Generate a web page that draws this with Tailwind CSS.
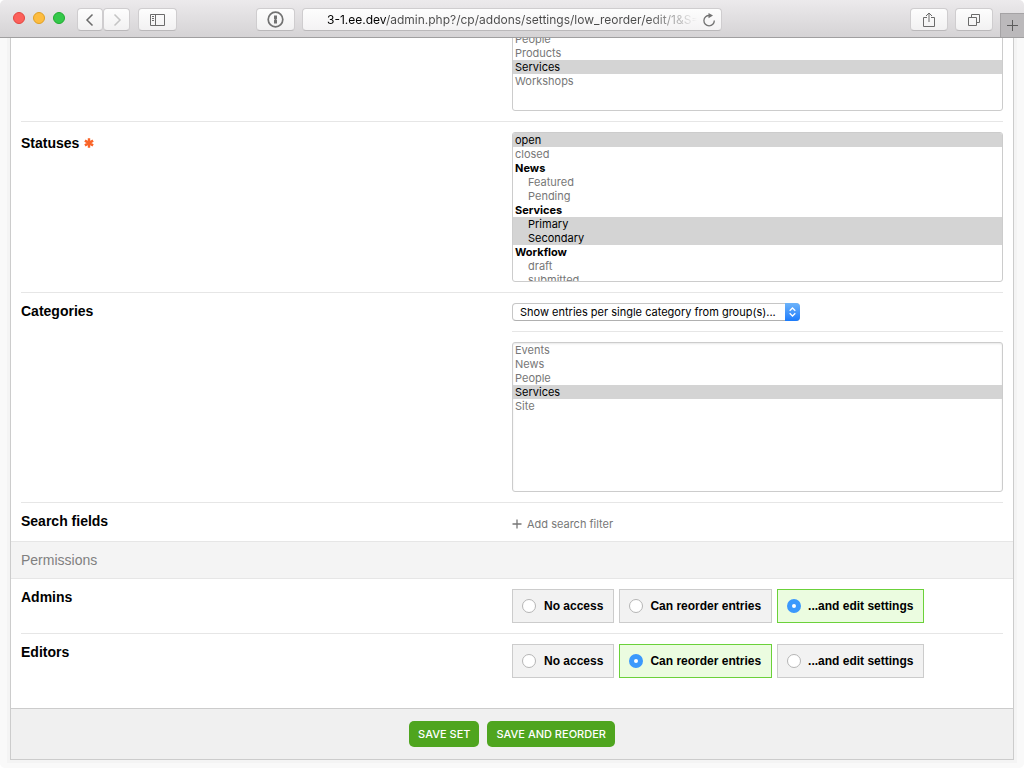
<!DOCTYPE html>
<html lang="en">
<head>
  <meta charset="UTF-8" />
  <meta name="viewport" content="width=device-width, initial-scale=1.0"/>
  <title>Low Reorder</title>
  <script src="https://cdn.jsdelivr.net/npm/@tailwindcss/browser@4"></script>
</head>
<body class="bg-white font-['Inter','Liberation_Sans',sans-serif] text-[11px] text-black">
  <div class="flex h-screen flex-col overflow-hidden rounded-[5px] bg-[#f9f9f9]">

    <!-- Browser toolbar -->
    <header class="z-10 grid h-[38px] shrink-0 grid-cols-[1fr_420px_1fr] border-b border-[#a09fa0] bg-linear-to-b from-[#eceaec] to-[#d5d3d5] pt-2 text-[#6b6b6b]">
      <div class="flex h-[23px] items-center pl-[13px] pr-[7px]">
        <div class="mr-3 flex gap-2 pb-[3px]">
          <span class="size-3 rounded-full border border-[#e2463f] bg-[#fc605b]"></span>
          <span class="size-3 rounded-full border border-[#dfa023] bg-[#fdbc40]"></span>
          <span class="size-3 rounded-full border border-[#1fab2f] bg-[#34c84a]"></span>
        </div>
        <div class="mr-2 flex">
          <button aria-label="Back" class="flex h-[23px] w-[26px] items-center justify-center rounded-[4px] border border-[#cfcdcf] border-b-[#bab8ba] bg-linear-to-b from-[#fdfdfd] to-[#f2f1f2]">
            <svg class="h-[14px] w-[10px]" viewBox="0 0 10 14" fill="none" stroke="#6b6b6b" stroke-width="1.5"><path d="M7.5 1.5 2 7l5.500 5.500"/></svg>
          </button>
          <button aria-label="Forward" class="flex h-[23px] w-[27px] items-center justify-center rounded-[4px] border border-[#cfcdcf] border-b-[#bab8ba] bg-linear-to-b from-[#fdfdfd] to-[#f2f1f2]">
            <svg class="h-[14px] w-[10px]" viewBox="0 0 10 14" fill="none" stroke="#c4c4c4" stroke-width="1.5"><path d="M2.500 1.500 8 7l-5.500 5.500"/></svg>
          </button>
        </div>
        <button aria-label="Sidebar" class="flex h-[23px] w-[39px] items-center justify-center rounded-[4px] border border-[#cfcdcf] border-b-[#bab8ba] bg-linear-to-b from-[#fdfdfd] to-[#f2f1f2]">
          <svg class="h-3 w-[15px]" viewBox="0 0 15 12" fill="none" stroke="#6b6b6b"><path d="M.5.5h14v11H.5zM5.500.5v11M2 2.500h2M2 4.500h2M2 6.500h2"/></svg>
        </button>
        <button aria-label="1Password" class="ml-auto flex h-[23px] w-[39px] items-center justify-center rounded-[4px] border border-[#cfcdcf] border-b-[#bab8ba] bg-linear-to-b from-[#fdfdfd] to-[#f2f1f2]">
          <svg class="size-[17px]" viewBox="0 0 17 17"><circle cx="8.500" cy="8.500" r="7.300" fill="none" stroke="#727272" stroke-width="1.700"/><path fill="#727272" d="M7 4.500h3v3.300l-.7.700.7.700v3.300H7V9.200l.7-.7-.7-.7z"/></svg>
        </button>
      </div>

      <div class="flex h-[23px] items-center rounded-[4px] border border-[#cfcdcf] border-b-[#bab8ba] bg-linear-to-b from-[#fdfdfd] to-[#f4f3f4] pl-6 pr-[5px]">
        <input aria-label="Address" type="text" value="3-1.ee.dev/admin.php?/cp/addons/settings/low_reorder/edit/1&amp;S=0" class="h-full min-w-0 flex-1 bg-[linear-gradient(90deg,#000_59px,#4a4a4a_59px,#4a4a4a_320px,transparent_370px)] bg-clip-text text-xs text-transparent outline-none"/>
        <button aria-label="Reload" class="shrink-0">
          <svg class="size-[14px]" viewBox="0 0 14 14"><path d="M7.500 2.500A5.200 5.200 0 1 0 12.300 7.500" fill="none" stroke="#727272" stroke-width="1.300"/><path fill="#727272" d="M6.500 0l4.500 2.600-4.500 2.600z"/></svg>
        </button>
      </div>

      <div class="flex justify-end gap-[7px]">
        <button aria-label="Share" class="flex h-[23px] w-[38px] items-center justify-center rounded-[4px] border border-[#cfcdcf] border-b-[#bab8ba] bg-linear-to-b from-[#fdfdfd] to-[#f2f1f2]">
          <svg class="h-4 w-3" viewBox="0 0 12 16" fill="none" stroke="#6b6b6b"><path d="M4 5.500H.5v9h11v-9H8M6 10V1M3 4l3-3 3 3"/></svg>
        </button>
        <button aria-label="Show tabs" class="flex h-[23px] w-[38px] items-center justify-center rounded-[4px] border border-[#cfcdcf] border-b-[#bab8ba] bg-linear-to-b from-[#fdfdfd] to-[#f2f1f2]">
          <svg class="size-3" viewBox="0 0 12 12" fill="none" stroke="#6b6b6b"><path d="M.5 3.500h8v8h-8zM3.500 3V.5h8v8H9"/></svg>
        </button>
        <button aria-label="New tab" class="mt-[5px] flex w-6 items-center justify-center border-l border-t border-[#a5a3a5] bg-[#bbb9bb]">
          <svg class="size-[11px]" viewBox="0 0 11 11" stroke="#5c5c5c"><path d="M5.500 0v11M0 5.500h11"/></svg>
        </button>
      </div>
    </header>

    <!-- Page, scrolled down to its end -->
    <main class="flex min-h-0 flex-1 flex-col justify-end px-[10px] pb-2">
      <form class="shrink-0 border border-[#ccc] bg-white ring-[3px] ring-[#f4f4f4]">
        <div class="px-[10px]">
          <div class="flex border-b border-[#e6e6e6] py-[10px]">
            <div class="w-1/2"></div>
            <select multiple aria-label="Channels" class="h-20 w-1/2 overflow-hidden rounded-[3px] border border-[#ccc] bg-white text-[#777] [scrollbar-width:none]">
              <option class="h-[14px] min-h-0 px-[2px] py-0 leading-[14px]">People</option>
              <option class="h-[14px] min-h-0 px-[2px] py-0 leading-[14px]">Products</option>
              <option selected class="h-[14px] min-h-0 bg-[#d4d4d4] px-[2px] py-0 leading-[14px] text-black">Services</option>
              <option class="h-[14px] min-h-0 px-[2px] py-0 leading-[14px]">Workshops</option>
            </select>
          </div>

          <div class="flex border-b border-[#e6e6e6] py-[10px]">
            <label for="statuses" class="flex w-1/2 items-center gap-[5px] self-start font-['Liberation_Sans',sans-serif] text-sm leading-[22px] font-bold">
              Statuses
              <svg class="size-[10px]" viewBox="0 0 10 10" stroke="#fa6428" stroke-width="2.400"><path d="M5 .3v9.400M.9 2.600l8.200 4.800M.9 7.400l8.200-4.800"/></svg>
            </label>
            <select id="statuses" multiple class="h-[150px] w-1/2 overflow-hidden rounded-[3px] border border-[#ccc] bg-white text-[#777] [scrollbar-width:none]">
              <option selected class="h-[14px] min-h-0 bg-[#d4d4d4] px-[2px] py-0 leading-[14px] text-black">open</option>
              <option class="h-[14px] min-h-0 px-[2px] py-0 leading-[14px]">closed</option>
              <optgroup label="News" class="p-0 text-black">
                <option class="-mt-px h-[14px] min-h-0 py-0 pl-[15px] font-normal leading-[14px] text-[#777]">Featured</option>
                <option class="h-[14px] min-h-0 py-0 pl-[15px] font-normal leading-[14px] text-[#777]">Pending</option>
              </optgroup>
              <optgroup label="Services" class="p-0 text-black">
                <option selected class="-mt-px h-[14px] min-h-0 bg-[#d4d4d4] py-0 pl-[15px] font-normal leading-[14px] text-black">Primary</option>
                <option selected class="h-[14px] min-h-0 bg-[#d4d4d4] py-0 pl-[15px] font-normal leading-[14px] text-black">Secondary</option>
              </optgroup>
              <optgroup label="Workflow" class="p-0 text-black">
                <option class="-mt-px h-[14px] min-h-0 py-0 pl-[15px] font-normal leading-[14px] text-[#777]">draft</option>
                <option class="h-[14px] min-h-0 py-0 pl-[15px] font-normal leading-[14px] text-[#777]">submitted</option>
              </optgroup>
            </select>
          </div>

          <div class="flex border-b border-[#e6e6e6] py-[10px]">
            <label for="categoryMode" class="w-1/2 self-start font-['Liberation_Sans',sans-serif] text-sm leading-4 font-bold">Categories</label>
            <div class="w-1/2">
              <div class="border-b border-[#e6e6e6] pb-[10px]">
                <div class="relative w-72">
                  <select id="categoryMode" class="block h-[18px] w-full appearance-none rounded-[4px] border border-[#c6c6c6] border-b-[#b0b0b0] bg-white pl-[7px] pr-4 leading-4">
                    <option>Show entries per single category from group(s)...</option>
                  </select>
                  <span class="pointer-events-none absolute inset-y-0 right-0 flex w-[15px] items-center justify-center rounded-r-[4px] bg-linear-to-b from-[#6cb3fa] to-[#1a7bfb]">
                    <svg class="h-[10px] w-[7px]" viewBox="0 0 7 10" fill="none" stroke="#fff" stroke-width="1.300"><path d="M.7 3.700 3.500 1l2.800 2.700M.7 6.300 3.500 9l2.800-2.700"/></svg>
                  </span>
                </div>
              </div>
              <select multiple aria-label="Category groups" class="mt-[10px] block h-[150px] w-full overflow-hidden rounded-[3px] border border-[#ccc] bg-white text-[#777] inset-shadow-[0_1px_2px_#e8e8e8] [scrollbar-width:none]">
                <option class="h-[14px] min-h-0 px-[2px] py-0 leading-[14px]">Events</option>
                <option class="h-[14px] min-h-0 px-[2px] py-0 leading-[14px]">News</option>
                <option class="h-[14px] min-h-0 px-[2px] py-0 leading-[14px]">People</option>
                <option selected class="h-[14px] min-h-0 bg-[#d4d4d4] px-[2px] py-0 leading-[14px] text-black">Services</option>
                <option class="h-[14px] min-h-0 px-[2px] py-0 leading-[14px]">Site</option>
              </select>
            </div>
          </div>

          <div class="flex h-[38px]">
            <div class="w-1/2 pt-2 font-['Liberation_Sans',sans-serif] text-sm font-bold">Search fields</div>
            <a href="#" class="flex items-center gap-[5px] pt-1 text-[#777]">
              <svg class="size-[10px]" viewBox="0 0 10 10" stroke="#777" stroke-width="1.300"><path d="M5 .5v9M.5 5h9"/></svg>
              Add search filter
            </a>
          </div>
        </div>

        <h2 class="border-y border-[#e6e6e6] bg-[#f4f4f4] px-[10px] py-2 font-['Liberation_Sans',sans-serif] text-sm text-[#808080]">Permissions</h2>

        <div class="px-[10px] font-['Liberation_Sans',sans-serif] font-bold">
          <fieldset class="flex border-b border-[#e6e6e6] py-[10px]" aria-label="Admins">
            <div class="w-1/2 text-sm leading-4">Admins</div>
            <div class="flex gap-[5px] text-xs">
              <label class="flex h-[34px] items-center gap-2 border border-[#ccc] bg-[#f2f2f2] pl-[9px] pr-[10px]">
                <input type="radio" name="admins" class="size-[14px] appearance-none rounded-full border border-[#b5b5b5] bg-white"/>No access
              </label>
              <label class="flex h-[34px] items-center gap-[7px] border border-[#ccc] bg-[#f2f2f2] pl-[9px] pr-[10px]">
                <input type="radio" name="admins" class="size-[14px] appearance-none rounded-full border border-[#b5b5b5] bg-white"/>Can reorder entries
              </label>
              <label class="flex h-[34px] items-center gap-[7px] border border-[#6bd13a] bg-[#ebfce0] pl-[9px] pr-[10px]">
                <input type="radio" name="admins" checked class="size-[14px] appearance-none rounded-full border-[5px] border-[#3b99fc] bg-white"/>...and edit settings
              </label>
            </div>
          </fieldset>

          <fieldset class="flex pb-[30px] pt-[10px]" aria-label="Editors">
            <div class="w-1/2 text-sm leading-4">Editors</div>
            <div class="flex gap-[5px] text-xs">
              <label class="flex h-[34px] items-center gap-2 border border-[#ccc] bg-[#f2f2f2] pl-[9px] pr-[10px]">
                <input type="radio" name="editors" class="size-[14px] appearance-none rounded-full border border-[#b5b5b5] bg-white"/>No access
              </label>
              <label class="flex h-[34px] items-center gap-[7px] border border-[#6bd13a] bg-[#ebfce0] pl-[9px] pr-[10px]">
                <input type="radio" name="editors" checked class="size-[14px] appearance-none rounded-full border-[5px] border-[#3b99fc] bg-white"/>Can reorder entries
              </label>
              <label class="flex h-[34px] items-center gap-[7px] border border-[#ccc] bg-[#f2f2f2] pl-[9px] pr-[10px]">
                <input type="radio" name="editors" class="size-[14px] appearance-none rounded-full border border-[#b5b5b5] bg-white"/>...and edit settings
              </label>
            </div>
          </fieldset>
        </div>

        <div class="flex justify-center gap-2 border-t border-[#ccc] bg-[#f0f0f0] py-3">
          <button type="button" class="h-[26px] rounded-[5px] bg-[#4fa51f] px-[9px] font-medium text-white">SAVE SET</button>
          <button type="button" class="h-[26px] rounded-[5px] bg-[#4fa51f] px-[9px] font-medium text-white">SAVE AND REORDER</button>
        </div>
      </form>
    </main>
  </div>
</body>
</html>
